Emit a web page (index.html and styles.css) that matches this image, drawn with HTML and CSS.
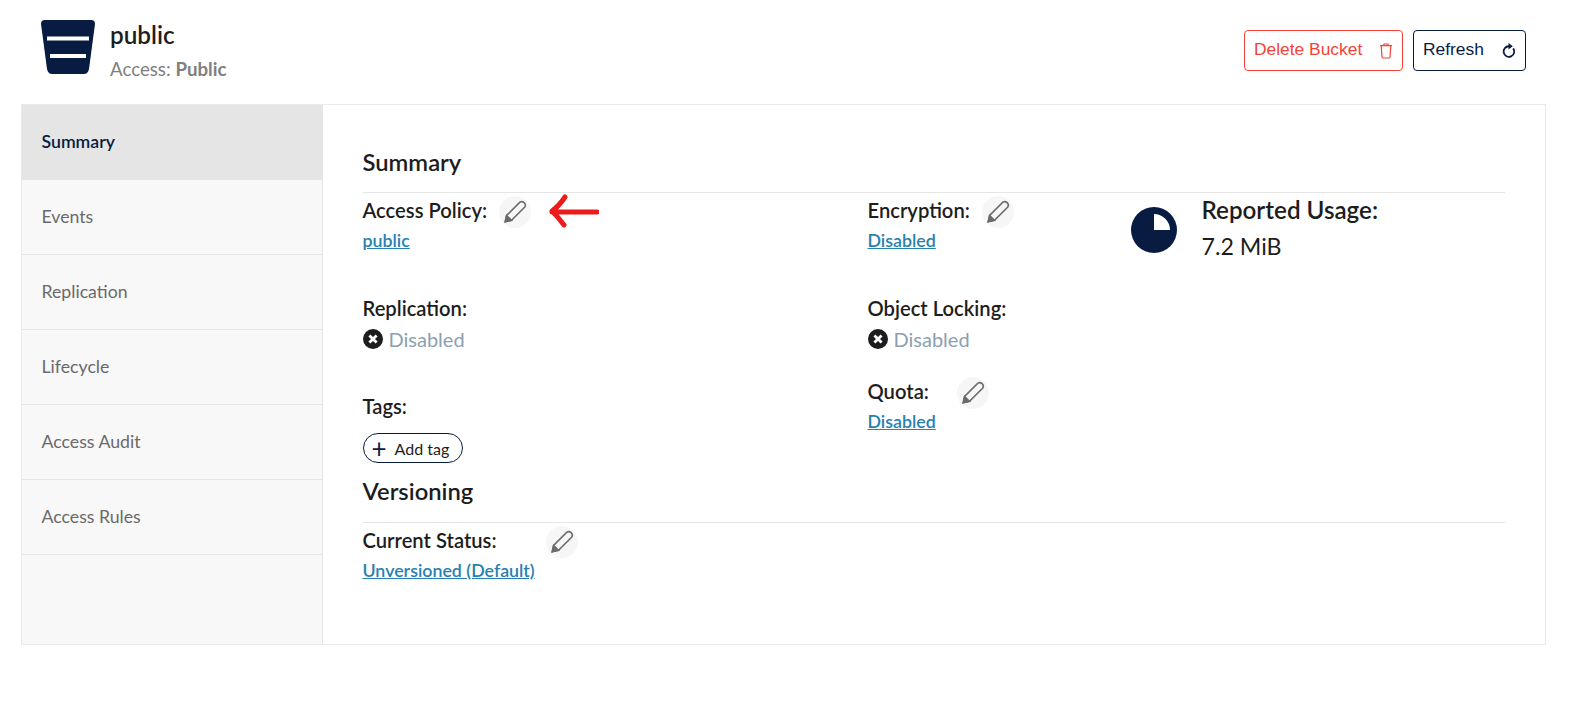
FILE: index.html
```html
<!DOCTYPE html>
<html lang="en">
<head>
  <meta charset="UTF-8" />
  <title>Bucket Summary</title>
  <link rel="stylesheet" href="styles.css">
</head>
<body>

  <header class="top">
    <div class="bucket">
      <svg class="bucket-icon" viewBox="0 0 54 54" width="54" height="54">
        <path fill="#081c42" d="M4 0H50Q54 0 54 4L48 49Q47 54 43 54H11Q7 54 6 49L0 4Q0 0 4 0Z"/>
        <rect x="6" y="16.5" width="42" height="4" fill="#fff"/>
        <rect x="9" y="34" width="36" height="4" fill="#fff"/>
      </svg>
      <div>
        <div class="bucket-name">public</div>
        <div class="bucket-access">Access: <b>Public</b></div>
      </div>
    </div>
    <div class="actions">
      <button class="btn btn-delete">Delete Bucket
        <svg viewBox="0 0 14 16" width="14" height="16" fill="none" stroke="currentColor" stroke-width="1.2">
          <path d="M1 2.6H13M4.5 2.4 5 1H9L9.5 2.4M2.2 2.8 3 14Q3 15 4 15H10Q11 15 11 14L11.8 2.8"/>
        </svg>
      </button>
      <button class="btn btn-refresh">Refresh
        <svg viewBox="0 0 14 16" width="15" height="17" fill="none" stroke="currentColor" stroke-width="1.7">
          <path d="M7.5 4A5 5 0 1 0 11.4 6"/>
          <path d="M7 1 11 4 7 7Z" fill="currentColor" stroke="none"/>
        </svg>
      </button>
    </div>
  </header>

  <div class="panel">
    <nav class="sidebar">
      <a class="nav-item active">Summary</a>
      <a class="nav-item">Events</a>
      <a class="nav-item">Replication</a>
      <a class="nav-item">Lifecycle</a>
      <a class="nav-item">Access Audit</a>
      <a class="nav-item">Access Rules</a>
    </nav>

    <main class="content">
      <h3 class="section-title">Summary</h3>
      <div class="summary-grid">
        <div class="col">
          <div class="field">
            <div class="field-label">
              <span>Access Policy:</span>
              <span class="edit">
                <svg viewBox="0 0 20 20" width="28" height="28" fill="none" stroke="#6b6b6b" stroke-width="1.1"><path d="M3 17 4 12.5 13.5 3Q15 2 16.5 3.3T17 6.5L7.5 16Z"/><path d="M3 17 4 12.5 7.5 16Z" fill="#6b6b6b"/></svg>
              </span>
              <svg class="arrow" viewBox="0 0 50 34" width="50" height="34" fill="none" stroke="#ec1c1c" stroke-width="5" stroke-linecap="round" stroke-linejoin="round"><path d="M48 18H3M16 3Q10 12 3 17 9 23 15 31"/></svg>
            </div>
            <a class="field-link">public</a>
          </div>
          <div class="field">
            <div class="field-label"><span>Replication:</span></div>
            <div class="status">
              <svg viewBox="0 0 20 20" width="20" height="20"><circle cx="10" cy="10" r="10" fill="#1d1d1d"/><path d="M6.4 6.4 13.6 13.6M13.6 6.4 6.4 13.6" stroke="#fff" stroke-width="2.8"/></svg>
              Disabled
            </div>
          </div>
          <div class="field field-tags">
            <div class="field-label"><span>Tags:</span></div>
            <button class="add-tag"><span class="plus">+</span>Add tag</button>
          </div>
        </div>

        <div class="col">
          <div class="field">
            <div class="field-label">
              <span>Encryption:</span>
              <span class="edit">
                <svg viewBox="0 0 20 20" width="28" height="28" fill="none" stroke="#6b6b6b" stroke-width="1.1"><path d="M3 17 4 12.5 13.5 3Q15 2 16.5 3.3T17 6.5L7.5 16Z"/><path d="M3 17 4 12.5 7.5 16Z" fill="#6b6b6b"/></svg>
              </span>
            </div>
            <a class="field-link">Disabled</a>
          </div>
          <div class="field field-locking">
            <div class="field-label"><span>Object Locking:</span></div>
            <div class="status">
              <svg viewBox="0 0 20 20" width="20" height="20"><circle cx="10" cy="10" r="10" fill="#1d1d1d"/><path d="M6.4 6.4 13.6 13.6M13.6 6.4 6.4 13.6" stroke="#fff" stroke-width="2.8"/></svg>
              Disabled
            </div>
          </div>
          <div class="field field-tags">
            <div class="field-label">
              <span>Quota:</span>
              <span class="edit edit-quota">
                <svg viewBox="0 0 20 20" width="28" height="28" fill="none" stroke="#6b6b6b" stroke-width="1.1"><path d="M3 17 4 12.5 13.5 3Q15 2 16.5 3.3T17 6.5L7.5 16Z"/><path d="M3 17 4 12.5 7.5 16Z" fill="#6b6b6b"/></svg>
              </span>
            </div>
            <a class="field-link">Disabled</a>
          </div>
        </div>

        <div class="usage">
          <svg viewBox="0 0 46 46" width="46" height="46"><circle cx="23" cy="23" r="23" fill="#081c42"/><path d="M23 7A16 16 0 0 1 39 23H23Z" fill="#fff"/></svg>
          <div>
            <div class="usage-label">Reported Usage:</div>
            <div class="usage-value">7.2 MiB</div>
          </div>
        </div>
      </div>

      <h3 class="section-title versioning-title">Versioning</h3>
      <div class="field field-status">
        <div class="field-label">
          <span>Current Status:</span>
          <span class="edit edit-status">
            <svg viewBox="0 0 20 20" width="28" height="28" fill="none" stroke="#6b6b6b" stroke-width="1.1"><path d="M3 17 4 12.5 13.5 3Q15 2 16.5 3.3T17 6.5L7.5 16Z"/><path d="M3 17 4 12.5 7.5 16Z" fill="#6b6b6b"/></svg>
          </span>
        </div>
        <a class="field-link">Unversioned (Default)</a>
      </div>
    </main>
  </div>

</body>
</html>
```

FILE: styles.css
```css
body {
  font-family: 'Lato', sans-serif;
  color: #1d1d1d;
  margin: 0;
  background: #fff;
}

.top {
  display: flex;
  justify-content: space-between;
  align-items: flex-start;
  height: 104px;
  padding: 20px 20px 0 41px;
  box-sizing: border-box;
}

.bucket {
  display: flex;
  gap: 15px;
}

.bucket-name {
  font-size: 24.3px;
  line-height: 30px;
  font-weight: 600;
}

.bucket-access {
  font-size: 18.7px;
  line-height: 22px;
  margin-top: 8px;
  color: #808080;
}

.actions {
  display: flex;
  gap: 10px;
  padding: 10px 29px 0 0;
}

.btn {
  display: flex;
  align-items: center;
  justify-content: space-between;
  height: 41px;
  padding: 0 9px 2px;
  border-radius: 4px;
  background: #fff;
  font-family: 'Liberation Sans', sans-serif;
  font-size: 17.4px;
  cursor: pointer;
}

.btn svg {
  margin-top: 2px;
}

.btn-delete {
  width: 159px;
  color: #f44336;
  border: 1px solid #f44336;
}

.btn-refresh {
  width: 113px;
  color: #081c42;
  border: 1px solid #081c42;
}

.panel {
  display: flex;
  height: 541px;
  margin: 0 29px 0 21px;
  border: 1px solid #eaeaea;
  box-sizing: border-box;
}

.sidebar {
  width: 300px;
  background: #f8f8f8;
  border-right: 1px solid #e5e5e5;
  flex-shrink: 0;
}

.nav-item {
  display: flex;
  align-items: center;
  height: 75px;
  box-sizing: border-box;
  padding: 0 0 2px 19.5px;
  font-size: 17.7px;
  color: #6a6a6a;
  border-bottom: 1px solid #e5e5e5;
}

.nav-item.active {
  background: #e5e5e5;
  color: #081c42;
  font-weight: 600;
  border-bottom: none;
}

.content {
  flex: 1;
  padding: 39px 40px 0 39.5px;
  min-width: 0;
}

.section-title {
  margin: 0;
  height: 49px;
  font-size: 23.8px;
  line-height: 36px;
  font-weight: 600;
  border-bottom: 1px solid #e5e5e5;
  box-sizing: border-box;
}

.summary-grid {
  display: grid;
  grid-template-columns: 505px 263px 1fr;
  padding-top: 3px;
}

.field {
  height: 98px;
}

.field-locking {
  height: 83px;
}

.field-tags {
  height: auto;
}

.field-label {
  display: flex;
  align-items: flex-start;
  gap: 12px;
  height: 32px;
  font-size: 20.2px;
  line-height: 29px;
  font-weight: 600;
}

.edit {
  display: flex;
  align-items: center;
  justify-content: center;
  width: 32px;
  height: 32px;
  border-radius: 50%;
  background: #f6f6f6;
}

.edit-quota {
  margin-left: 16px;
}

.edit-status {
  margin-left: 37px;
}

.arrow {
  margin: -2px 0 0 6px;
}

.field-link {
  display: block;
  font-size: 17.8px;
  line-height: 22px;
  margin-top: 1px;
  font-weight: 600;
  color: #2781b0;
  text-decoration: underline;
}

.status {
  display: flex;
  align-items: center;
  gap: 6px;
  margin-top: -1px;
  font-size: 20px;
  line-height: 28px;
  color: #8ba0b1;
}

.usage {
  display: flex;
  gap: 25px;
  align-items: flex-start;
  padding-top: 11px;
}

.usage-label {
  font-size: 24.2px;
  line-height: 30px;
  font-weight: 600;
  margin-top: -12px;
}

.usage-value {
  font-size: 23.2px;
  line-height: 30px;
  margin-top: 6px;
}

.add-tag {
  display: flex;
  align-items: center;
  height: 30px;
  width: 100px;
  margin-top: 9px;
  padding: 0 8px;
  border: 1px solid #081c42;
  border-radius: 15px;
  background: #fff;
  font-family: 'Lato', sans-serif;
  font-size: 16px;
  color: #1d1d1d;
}

.plus {
  font-size: 26px;
  line-height: 26px;
  color: #081c42;
  margin-right: 8px;
}

.versioning-title {
  margin-top: 11px;
  line-height: 34px;
}

.field-status {
  padding-top: 3px;
}
```
